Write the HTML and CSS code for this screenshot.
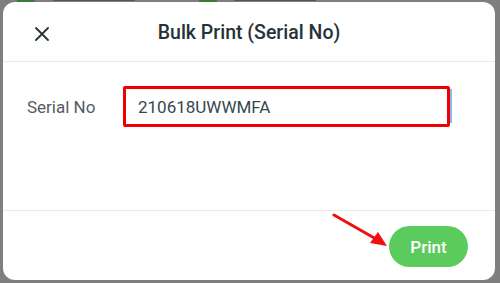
FILE: index.html
```html
<!DOCTYPE html>
<html>
<head>
<meta charset="utf-8">
<link rel="stylesheet" href="styles.css">
</head>
<body>
<div class="backdrop">
  <div class="bg-bits">
    <span class="chip c1"></span><span class="bar b1"></span>
    <span class="chip c2"></span><span class="bar b2"></span>
  </div>
  <div class="dialog">
    <div class="header">
      <button class="close" aria-label="Close">
        <svg width="14" height="14" viewBox="0 0 14 14"><path d="M1 1L13 13M13 1L1 13" stroke="#263238" stroke-width="1.8" stroke-linecap="round"/></svg>
      </button>
      <div class="title">Bulk Print (Serial No)</div>
    </div>
    <div class="body">
      <label class="label">Serial No</label>
      <div class="field">
        <div class="input">210618UWWMFA</div>
        <div class="mark"></div>
      </div>
    </div>
    <div class="footer">
      <svg class="arrow" width="60" height="40" viewBox="0 0 60 40">
        <line x1="2" y1="2" x2="44" y2="26" stroke="#f01010" stroke-width="3" stroke-linecap="round"/>
        <polygon points="55,33 38,30 46,19" fill="#f01010"/>
      </svg>
      <button class="print">Print</button>
    </div>
  </div>
</div>
</body>
</html>
```
FILE: styles.css
```css
html, body {
  margin: 0;
  padding: 0;
}
body {
  width: 500px;
  height: 283px;
  overflow: hidden;
  background: #7f7f7f;
  font-family: Roboto, "Noto Sans", sans-serif;
}
.backdrop {
  position: relative;
  width: 500px;
  height: 283px;
  padding: 2px 5px 3px 3px;
  box-sizing: border-box;
}
.bg-bits {
  position: absolute;
  left: 0;
  top: -10px;
  width: 500px;
  height: 13px;
}
.chip {
  position: absolute;
  top: 0;
  width: 18px;
  height: 13px;
  background: #3b7a3b;
  border-radius: 2px;
}
.c1 { left: 17px; }
.c2 { left: 199px; }
.bar {
  position: absolute;
  top: 7px;
  height: 4px;
  background: #3a3a3a;
  opacity: 0.6;
}
.b1 { left: 53px; width: 82px; }
.b2 { left: 234px; width: 82px; }
.dialog {
  position: relative;
  background: #fff;
  border-radius: 12px;
  height: 100%;
  display: flex;
  flex-direction: column;
  overflow: hidden;
}
.header {
  height: 59px;
  border-bottom: 1px solid #e9e9e9;
  display: flex;
  align-items: center;
  justify-content: center;
  position: relative;
  flex: none;
}
.close {
  position: absolute;
  left: 29px;
  top: 22px;
  width: 20px;
  height: 20px;
  padding: 0;
  border: 0;
  background: none;
  display: flex;
  align-items: center;
  justify-content: center;
}
.title {
  font-size: 19.5px;
  font-weight: 500;
  color: #263238;
  margin-top: 1px;
}
.body {
  height: 149px;
  border-bottom: 1px solid #e9e9e9;
  display: flex;
  align-items: flex-start;
  padding: 24px 0 0 24px;
  box-sizing: border-box;
  flex: none;
}
.label {
  font-size: 17px;
  color: #555b5f;
  width: 96px;
  height: 41px;
  display: flex;
  align-items: center;
}
.field {
  position: relative;
  width: 326px;
  height: 41px;
}
.input {
  box-sizing: border-box;
  height: 41px;
  width: 327px;
  border: 3px solid #ee0000;
  border-radius: 2px;
  font-size: 17px;
  color: #37474f;
  padding-left: 12px;
  display: flex;
  align-items: center;
}
.mark {
  position: absolute;
  right: -3px;
  top: 3px;
  width: 2px;
  height: 34px;
  background: #8ab8f0;
}
.footer {
  flex: 1;
  display: flex;
  align-items: flex-start;
  justify-content: flex-end;
  padding: 15px 27px 0 0;
  position: relative;
}
.arrow {
  position: absolute;
  left: 329px;
  top: 2px;
}
.print {
  width: 79px;
  height: 41px;
  border: 0;
  border-radius: 21px;
  background: #5ccb5e;
  color: #fff;
  font-family: Roboto, sans-serif;
  font-size: 17px;
  font-weight: 500;
  padding: 0;
}
```
